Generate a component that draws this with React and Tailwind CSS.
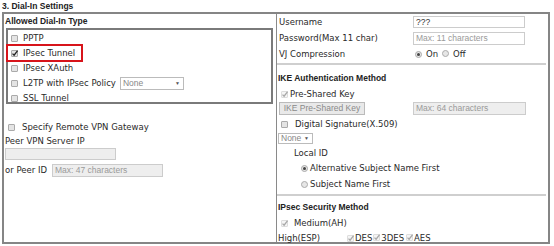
const Check = ({ checked, disabled }) => (
  <span
    className={`relative inline-block w-[7px] h-[7px] shrink-0 rounded-[1px] border ${
      disabled ? "border-[#dddddd] bg-[#f5f5f5]" : "border-[#aaaaaa] bg-[#e4e4e4]"
    }`}
  >
    {checked && (
      <svg className="absolute left-[-1px] top-[-2px] w-[8px] h-[8px]" viewBox="0 0 8 8">
        <path d="M1.5 4.6 L3.1 6.2 L6.6 1.6" stroke={disabled ? "#a8a8a8" : "#222"} strokeWidth="1.3" fill="none" />
      </svg>
    )}
  </span>
);

const Radio = ({ on }) => (
  <span className="inline-flex items-center justify-center w-[7px] h-[7px] shrink-0 rounded-full border border-[#aaaaaa] bg-[#e6e6e6]">
    {on && <span className="w-[3px] h-[3px] rounded-full bg-[#444]" />}
  </span>
);

const Field = ({ w, h = "h-[12px]", text, dim = true, white }) => (
  <div
    className={`${w} ${h} shrink-0 border border-[#cccccc] ${white ? "bg-white" : "bg-[#eeeeee]"} flex items-center pl-[2px] font-['Liberation_Sans',sans-serif] text-[8.5px] ${
      dim ? "text-[#9a9a9a]" : "text-[#333]"
    }`}
  >
    {text}
  </div>
);

const Select = ({ w, h }) => (
  <div className={`${w} ${h} shrink-0 border border-[#bbbbbb] bg-white flex items-center justify-between px-[2px] font-['Liberation_Sans',sans-serif] text-[8.5px] text-[#888]`}>
    <span>None</span>
    <span className="text-[5px] text-[#555] pr-[1px]">▼</span>
  </div>
);

const Head = ({ children, cls }) => (
  <div className={`flex items-center font-['Liberation_Sans',sans-serif] font-bold text-[8.5px] text-[#222] ${cls}`}>{children}</div>
);

export default function App() {
  const dialTypes = ["PPTP", "IPsec Tunnel", "IPsec XAuth", "L2TP with IPsec Policy", "SSL Tunnel"];

  return (
    <div className="w-[554px] h-[246px] bg-white font-['DejaVu_Sans',sans-serif] text-[8.5px] text-[#2a2a2a] overflow-hidden">
      <Head cls="h-[12px] pl-[2px]">3. Dial-In Settings</Head>

      <div className="ml-[2px] w-[548px] h-[232px] border-2 border-[#858585] flex">
        {/* left column */}
        <div className="w-[273px] h-full border-r border-[#8a8a8a] shrink-0">
          <Head cls="h-[14px] pl-[1px]">Allowed Dial-In Type</Head>
          <div className="relative ml-[2px] w-[267px] h-[76px] border-2 border-[#7a7a7a]">
            <div className="pt-[1px]">
              {dialTypes.map((t, i) => (
                <div key={t} className="h-[15px] flex items-center pl-[3px]">
                  <Check checked={i === 1} />
                  <span className="ml-[5px]">{t}</span>
                  {i === 3 && (
                    <div className="ml-[4px]">
                      <Select w="w-[64px]" h="h-[13px]" />
                    </div>
                  )}
                </div>
              ))}
            </div>
            <div className="absolute left-[-2px] top-[14px] w-[77px] h-[18px] border-2 border-[#d7141b]" />
          </div>

          <div className="mt-[16px] h-[15px] flex items-center pl-[4px]">
            <Check />
            <span className="ml-[7px]">Specify Remote VPN Gateway</span>
          </div>
          <div className="h-[13px] flex items-center pl-[1px]">Peer VPN Server IP</div>
          <div className="pl-[1px]">
            <Field w="w-[111px]" text="" />
          </div>
          <div className="mt-[4px] h-[13px] flex items-center pl-[1px]">
            <span className="w-[47px]">or Peer ID</span>
            <Field w="w-[111px]" h="h-[13px]" text="Max: 47 characters" />
          </div>
        </div>

        {/* right column */}
        <div className="flex-1 h-full">
          <div className="h-[16px] flex items-center pl-[2px]">
            <span className="w-[134px]">Username</span>
            <Field w="w-[112px]" text="???" dim={false} white />
          </div>
          <div className="h-[16px] flex items-center pl-[2px]">
            <span className="w-[134px]">Password(Max 11 char)</span>
            <Field w="w-[112px]" h="h-[13px]" text="Max: 11 characters" white />
          </div>
          <div className="h-[16px] flex items-center pl-[2px]">
            <span className="w-[136px]">VJ Compression</span>
            <Radio on />
            <span className="ml-[4px]">On</span>
            <span className="ml-[4px]"><Radio /></span>
            <span className="ml-[4px]">Off</span>
          </div>
          <div className="mt-[1px] h-[2px] bg-[#cfcfcf] mr-[2px]" />

          <Head cls="mt-[6px] h-[14px] pl-[1px]">IKE Authentication Method</Head>
          <div className="mt-[1px] h-[16px] flex items-center pl-[4px]">
            <Check checked disabled />
            <span className="ml-[2px]">Pre-Shared Key</span>
          </div>
          <div className="h-[13px] flex items-center pl-[2px]">
            <div className="w-[86px] h-[13px] border border-[#bbbbbb] bg-[#e9e9e9] flex items-center justify-center font-['Liberation_Sans',sans-serif] text-[8.5px] text-[#8a8a8a]">
              IKE Pre-Shared Key
            </div>
            <div className="ml-[48px]">
              <Field w="w-[113px]" h="h-[13px]" text="Max: 64 characters" />
            </div>
          </div>
          <div className="mt-[1px] h-[16px] flex items-center pl-[4px]">
            <Check />
            <span className="ml-[7px]">Digital Signature(X.509)</span>
          </div>
          <div className="mt-[1px] pl-[1px]">
            <Select w="w-[35px]" h="h-[11px]" />
          </div>
          <div className="mt-[3px] h-[13px] flex items-center pl-[17px]">Local ID</div>
          <div className="h-[16px] flex items-center pl-[24px]">
            <Radio on />
            <span className="ml-[2px]">Alternative Subject Name First</span>
          </div>
          <div className="h-[16px] flex items-center pl-[24px]">
            <Radio />
            <span className="ml-[2px]">Subject Name First</span>
          </div>
          <div className="mt-[2px] h-[2px] bg-[#cfcfcf] mr-[2px]" />

          <Head cls="mt-[4px] h-[14px] pl-[1px]">IPsec Security Method</Head>
          <div className="mt-[1px] h-[16px] flex items-center pl-[4px]">
            <Check checked disabled />
            <span className="ml-[6px]">Medium(AH)</span>
          </div>
          <div className="h-[14px] flex items-center pl-[1px]">
            <span className="w-[69px]">High(ESP)</span>
            <Check checked disabled />
            <span className="ml-[1px]">DES</span>
            <span className="ml-[1px]"><Check checked disabled /></span>
            <span className="ml-[1px]">3DES</span>
            <span className="ml-[2px]"><Check checked disabled /></span>
            <span className="ml-[1px]">AES</span>
          </div>
        </div>
      </div>
    </div>
  );
}
